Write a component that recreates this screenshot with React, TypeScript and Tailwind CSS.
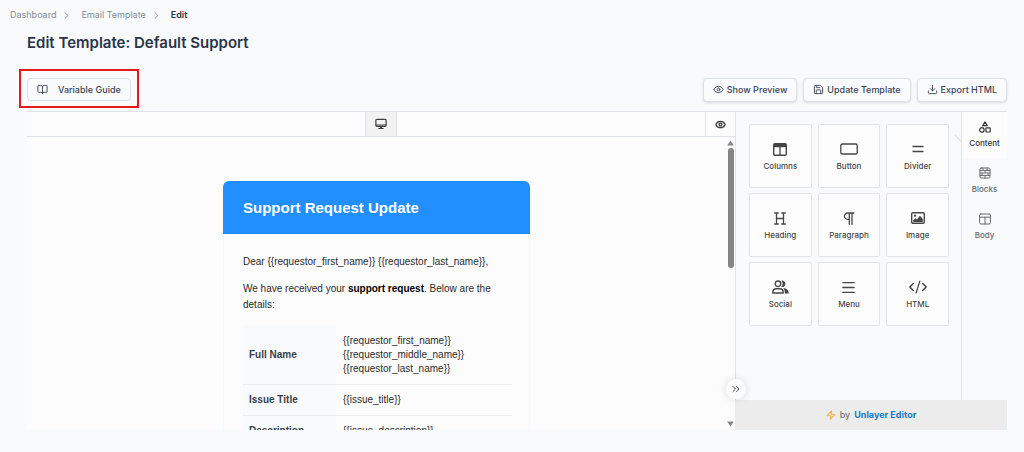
import type { ReactNode } from "react";
import {
  BookOpen,
  ChevronRight,
  ChevronsRight,
  Download,
  Eye,
  Menu,
  Save,
  Zap,
} from "lucide-react";

const line = {
  fill: "none",
  stroke: "currentColor",
  strokeLinecap: "round",
  strokeLinejoin: "round",
} as const;

function ColumnsIcon() {
  return (
    <svg width="14" height="13" viewBox="0 0 14 13">
      <rect x="0.7" y="0.7" width="12.6" height="11.6" rx="1.2" {...line} strokeWidth="1.4" />
      <path d="M1 1h12v3.2H1z" fill="currentColor" />
      <path d="M7 4v8" {...line} strokeWidth="1.3" />
    </svg>
  );
}

function ButtonIcon() {
  return (
    <svg width="18" height="12" viewBox="0 0 18 12">
      <rect x="0.8" y="1" width="16.4" height="10" rx="1.6" {...line} strokeWidth="1.3" />
    </svg>
  );
}

function DividerIcon() {
  return (
    <svg width="12" height="12" viewBox="0 0 12 12">
      <path d="M0.5 3.5h11M0.5 8.5h11" {...line} strokeLinecap="butt" strokeWidth="1.3" />
    </svg>
  );
}

function HeadingIcon() {
  return (
    <svg width="12" height="13" viewBox="0 0 12 13">
      <path
        d="M0.7 1h3.6M7.7 1h3.6M0.7 12h3.6M7.7 12h3.6M2.5 1v11M9.5 1v11M2.5 6.5h7"
        {...line}
        strokeWidth="1.3"
      />
    </svg>
  );
}

function ParagraphIcon() {
  return (
    <svg width="12" height="13" viewBox="0 0 12 13">
      <path
        d="M10.9 1H4.6a3.1 3.1 0 0 0 0 6.3h1.7M6.3 1v11.3M9 1v11.3"
        {...line}
        strokeWidth="1.3"
      />
    </svg>
  );
}

function ImageIcon() {
  return (
    <svg width="14" height="12" viewBox="0 0 14 12">
      <rect x="0.7" y="0.7" width="12.6" height="10.6" rx="1.2" {...line} strokeWidth="1.4" />
      <circle cx="4" cy="3.7" r="1.1" fill="currentColor" />
      <path d="M2.2 10V8.2l2.2-2 1.4 1.2L9 3.8l2.8 3.2V10z" fill="currentColor" />
    </svg>
  );
}

function SocialIcon() {
  return (
    <svg width="17" height="14" viewBox="0 0 17 14">
      <circle cx="6" cy="3.8" r="2.8" {...line} strokeWidth="1.4" />
      <path
        d="M0.8 13v-.8c0-2 1.6-3.4 3.6-3.4h3.2c2 0 3.6 1.4 3.6 3.4v.8z"
        {...line}
        strokeWidth="1.4"
      />
      <path d="M9.3 0.6a3.3 3.3 0 1 1 0 6.4 4.6 4.6 0 0 0 0-6.4z" fill="currentColor" />
      <path d="M11.2 8.2c3 0 5.4 1.6 5.4 4.3v1.1h-3.8v-1.2c0-1.7-.6-3.1-1.6-4.2z" fill="currentColor" />
    </svg>
  );
}

function HtmlIcon() {
  return (
    <svg width="18" height="14" viewBox="0 0 18 14">
      <path d="M4.3 3.5.8 7l3.5 3.5M13.7 3.5 17.2 7l-3.5 3.5" {...line} strokeWidth="1.5" />
      <path d="M10.9 1 7.1 13" {...line} strokeWidth="1.2" />
    </svg>
  );
}

function ShapesIcon() {
  return (
    <svg width="12" height="12" viewBox="0 0 12 12">
      <path d="M6 0.9 8.3 4.7H3.7z" {...line} strokeWidth="1.2" />
      <circle cx="2.9" cy="8.9" r="2.2" {...line} strokeWidth="1.2" />
      <rect x="7" y="6.8" width="4.2" height="4.2" rx="0.4" {...line} strokeWidth="1.2" />
    </svg>
  );
}

function BlocksIcon() {
  return (
    <svg width="12" height="12" viewBox="0 0 12 12">
      <rect x="1" y="1" width="10" height="10" rx="1.2" {...line} />
      <path
        d="M1 3.5h10M1 6h10M1 8.5h10M4 1v2.5M8 1v2.5M6 3.5V6M3 6v2.5M9 6v2.5M6 8.5V11"
        {...line}
        strokeWidth="0.9"
      />
    </svg>
  );
}

function BodyIcon() {
  return (
    <svg width="12" height="12" viewBox="0 0 12 12">
      <rect x="0.6" y="1" width="10.8" height="10" rx="1.2" {...line} />
      <path d="M0.6 4.2h10.8M6 4.2V11" {...line} />
    </svg>
  );
}

function MonitorIcon() {
  return (
    <svg width="12" height="12" viewBox="0 0 12 12">
      <rect x="0.9" y="1.3" width="10.2" height="7" rx="1" {...line} strokeWidth="1.2" />
      <path d="M1 7h10M3.8 10.5h4.4" {...line} strokeWidth="1.2" />
      <path d="M5 8.5h2v2H5z" fill="currentColor" />
    </svg>
  );
}

const tiles: { label: string; icon: ReactNode }[] = [
  { label: "Columns", icon: <ColumnsIcon /> },
  { label: "Button", icon: <ButtonIcon /> },
  { label: "Divider", icon: <DividerIcon /> },
  { label: "Heading", icon: <HeadingIcon /> },
  { label: "Paragraph", icon: <ParagraphIcon /> },
  { label: "Image", icon: <ImageIcon /> },
  { label: "Social", icon: <SocialIcon /> },
  { label: "Menu", icon: <Menu size={17} strokeWidth={1.8} /> },
  { label: "HTML", icon: <HtmlIcon /> },
];

const tabs: { label: string; icon: ReactNode; active: boolean }[] = [
  { label: "Content", icon: <ShapesIcon />, active: true },
  { label: "Blocks", icon: <BlocksIcon />, active: false },
  { label: "Body", icon: <BodyIcon />, active: false },
];

const rows: { label: string; values: string[] }[] = [
  {
    label: "Full Name",
    values: [
      "{{requestor_first_name}}",
      "{{requestor_middle_name}}",
      "{{requestor_last_name}}",
    ],
  },
  { label: "Issue Title", values: ["{{issue_title}}"] },
  { label: "Description", values: ["{{issue_description}}"] },
];

function ActionButton({ icon, label }: { icon: ReactNode; label: string }) {
  return (
    <button
      type="button"
      className="flex h-6 items-center gap-[3px] rounded border border-[#dbe2ea] bg-[#fafbfd] px-[9px] text-[9px] font-medium text-[#3a4454] shadow-sm"
    >
      {icon}
      {label}
    </button>
  );
}

function Header() {
  return (
    <header>
      <nav aria-label="Breadcrumb" className="flex h-4 items-center gap-[9px] pl-[10px] text-[9px] text-[#858b96]">
        <a href="#dashboard">Dashboard</a>
        <ChevronRight size={11} className="-ml-1" />
        <a href="#templates">Email Template</a>
        <ChevronRight size={11} className="-ml-1" />
        <span aria-current="page" className="font-semibold text-[#2c3646]">Edit</span>
      </nav>
      <h1 className="mt-2 pl-[27px] text-[15px] leading-6 font-semibold text-[#2a3447]">
        Edit Template: Default Support
      </h1>
    </header>
  );
}

function ActionBar() {
  return (
    <div className="mt-[14px] flex items-center justify-between pr-[17px] pl-[19px]">
      <div className="border-[2px] border-[#e3191d] px-[6px] pt-[7px] pb-[5px]">
        <button
          type="button"
          className="flex h-[23px] items-center gap-[10px] rounded border border-[#dbe2ea] px-[9px] text-[9px] font-medium text-[#3a4454]"
        >
          <BookOpen size={11} />
          Variable Guide
        </button>
      </div>
      <div className="mt-[2px] flex gap-[6px]">
        <ActionButton icon={<Eye size={11} />} label="Show Preview" />
        <ActionButton icon={<Save size={11} />} label="Update Template" />
        <ActionButton icon={<Download size={11} />} label="Export HTML" />
      </div>
    </div>
  );
}

function EmailCard() {
  return (
    <article className="mx-auto w-full max-w-[307px] font-['Liberation_Sans',Arial,sans-serif] text-[#2b2b2b]">
      <h2 className="rounded-t-md bg-[#218fff] px-5 py-4 text-[15px] leading-[21px] font-bold text-white">
        Support Request Update
      </h2>
      <div className="border-x border-[#f7f8f9] pt-5 pr-[17px] pl-[19px] text-[10px] leading-4">
        <p>{"Dear {{requestor_first_name}} {{requestor_last_name}},"}</p>
        <p className="mt-[11px]">
          We have received your <strong className="text-black">support request</strong>. Below are the
          details:
        </p>
        <table className="mt-[13px] w-full border-collapse leading-[14px]">
          <tbody>
            {rows.map((row) => (
              <tr key={row.label} className="border-b border-[#eceef0]">
                <th scope="row" className="w-[93px] bg-[#f8fafc] px-[6px] py-2 text-left font-bold text-[#36414d]">
                  {row.label}
                </th>
                <td className="px-[7px] py-2">
                  {row.values.map((value) => (
                    <div key={value}>{value}</div>
                  ))}
                </td>
              </tr>
            ))}
          </tbody>
        </table>
      </div>
    </article>
  );
}

function Scrollbar() {
  return (
    <div aria-hidden="true" className="flex w-[9px] shrink-0 flex-col items-center py-[3px] text-[#858585]">
      <svg width="7" height="6" viewBox="0 0 7 6">
        <path d="M3.5 0.5 6.8 5.5H.2z" fill="currentColor" />
      </svg>
      <div className="mt-[2px] h-[120px] w-[6px] rounded-full bg-[#858585]" />
      <svg width="7" height="6" viewBox="0 0 7 6" className="mt-auto">
        <path d="M3.5 5.5 6.8 0.5H.2z" fill="currentColor" />
      </svg>
    </div>
  );
}

function Canvas() {
  return (
    <section aria-label="Canvas" className="flex min-w-0 flex-1 flex-col bg-[#fcfcfc]">
      <div className="flex h-[26px] shrink-0 border-y border-[#dfe2e6]">
        <div className="flex-1" />
        <button
          type="button"
          aria-label="Desktop"
          className="flex w-8 items-center justify-center border-x border-[#dfe2e6] bg-[#f2f2f2] text-[#3c3c3c]"
        >
          <MonitorIcon />
        </button>
        <div className="flex flex-1 justify-end">
          <button
            type="button"
            aria-label="Preview"
            className="flex w-[30px] items-center justify-center border-l border-[#dfe2e6] text-[#3c3c3c]"
          >
            <Eye size={11} strokeWidth={2.8} />
          </button>
        </div>
      </div>
      <div className="flex min-h-0 flex-1">
        <div className="min-w-0 flex-1 overflow-hidden pt-11">
          <EmailCard />
        </div>
        <Scrollbar />
      </div>
    </section>
  );
}

function ToolPanel() {
  return (
    <aside className="relative flex w-[272px] shrink-0 flex-col">
      <div className="flex min-h-0 flex-1 border-t border-l border-[#dfe2e6]">
        <div className="grid flex-1 grid-cols-3 content-start gap-x-[6px] gap-y-[5px] py-3 pr-3 pl-[13px]">
          {tiles.map((tile) => (
            <button
              key={tile.label}
              type="button"
              className="flex h-16 flex-col items-center rounded-xs border border-[#e2e4e7] bg-[#fdfdfd] pt-4 text-[8px] leading-3 font-medium text-[#464646]"
            >
              <span className="flex h-4 items-center">{tile.icon}</span>
              <span className="mt-[3px]">{tile.label}</span>
            </button>
          ))}
        </div>
        <div className="flex w-[46px] flex-col border-l border-[#e0e2e5]">
          {tabs.map((tab) => (
            <button
              key={tab.label}
              type="button"
              aria-pressed={tab.active}
              className={
                tab.active
                  ? "flex h-[46px] flex-col items-center bg-[#fdfdfd] pt-[9px] text-[8px] leading-3 font-medium text-[#333333]"
                  : "flex h-[46px] flex-col items-center pt-[9px] text-[8px] leading-3 font-medium text-[#6a6a6a]"
              }
            >
              {tab.icon}
              <span className="mt-1">{tab.label}</span>
            </button>
          ))}
        </div>
      </div>
      <div className="flex h-[30px] shrink-0 items-center justify-center gap-1 bg-[#ececec] text-[9px] font-medium text-[#777777]">
        <Zap size={10} strokeWidth={2.5} className="text-[#f5b041]" />
        by
        <a href="#unlayer" className="font-bold text-[#1b7ac5]">Unlayer Editor</a>
      </div>
      <svg width="6" height="7" viewBox="0 0 6 7" className="absolute top-6 right-[46px] text-[#d5d7da]">
        <path d="M0.5 0.5 5.5 6" {...line} />
      </svg>
      <button
        type="button"
        aria-label="Collapse panel"
        className="absolute bottom-[31px] -left-[9px] flex size-5 items-center justify-center rounded-full bg-[#fcfcfc] text-[#444444] shadow-[0_0_10px_rgba(0,0,0,0.12)]"
      >
        <ChevronsRight size={12} />
      </button>
    </aside>
  );
}

export default function App() {
  return (
    <main className="flex h-screen flex-col overflow-hidden bg-[#f9fafc] pt-[7px] pb-[22px] font-[Inter,sans-serif]">
      <Header />
      <ActionBar />
      <div className="mr-[17px] ml-[27px] mt-[3px] flex min-h-0 flex-1">
        <Canvas />
        <ToolPanel />
      </div>
    </main>
  );
}
